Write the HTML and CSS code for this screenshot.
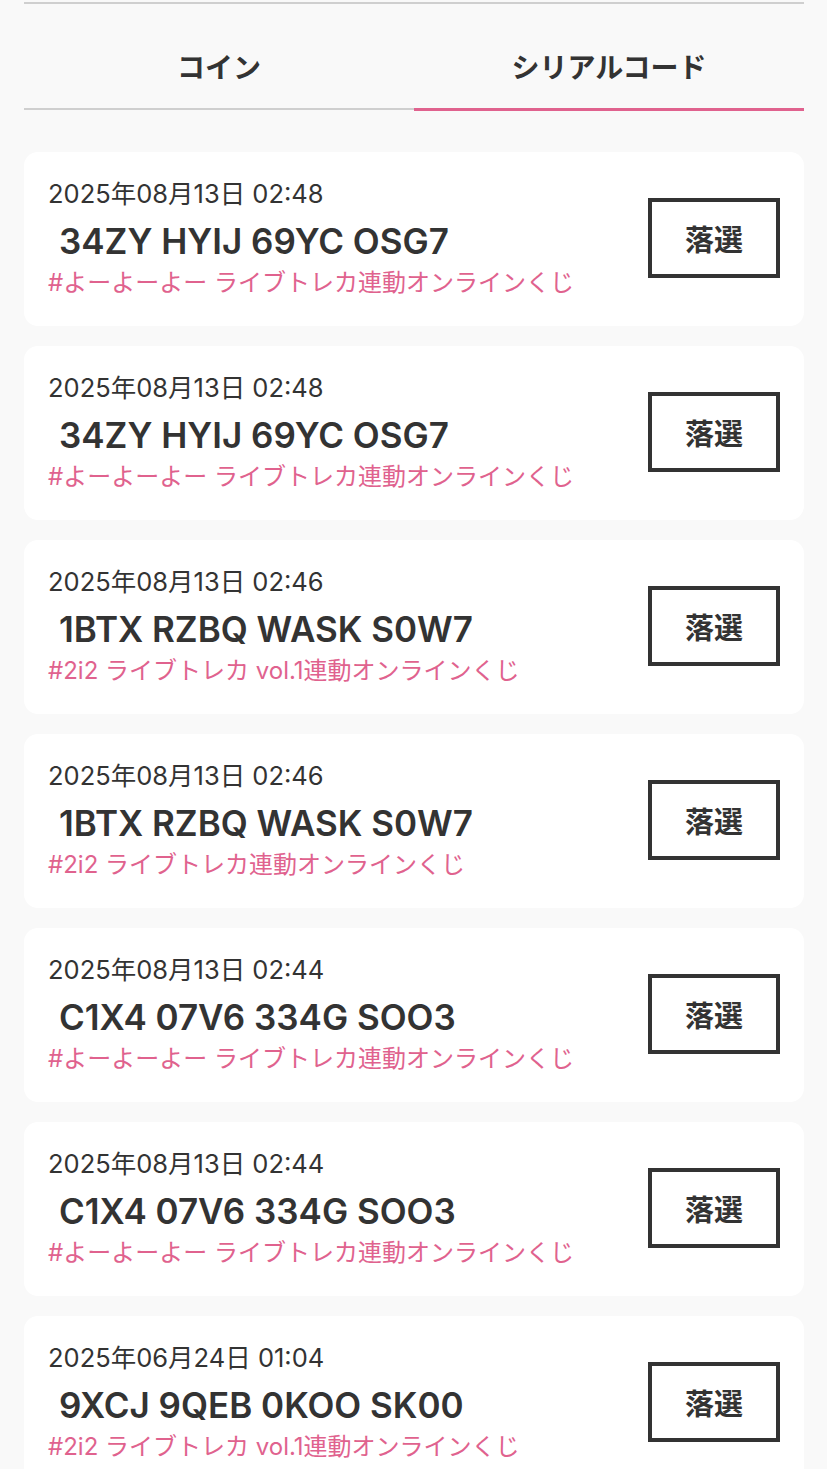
FILE: index.html
```html
<!DOCTYPE html>
<html lang="ja">
    <head>
        <meta charset="utf-8">
        <link rel="stylesheet" href="styles.css">
    </head>
    <body>
        <div class="page">
            <div class="tabs">
                <div class="tab">コイン</div>
                <div class="tab active">シリアルコード</div>
            </div>

            <div class="list">
                <div class="card">
                    <div class="info">
                        <div class="date">2025年08月13日 02:48</div>
                        <div class="code">34ZY HYIJ 69YC OSG7</div>
                        <div class="tag">#よーよーよー ライブトレカ連動オンラインくじ</div>
                    </div>
                    <div class="result">落選</div>
                </div>
                <div class="card">
                    <div class="info">
                        <div class="date">2025年08月13日 02:48</div>
                        <div class="code">34ZY HYIJ 69YC OSG7</div>
                        <div class="tag">#よーよーよー ライブトレカ連動オンラインくじ</div>
                    </div>
                    <div class="result">落選</div>
                </div>
                <div class="card">
                    <div class="info">
                        <div class="date">2025年08月13日 02:46</div>
                        <div class="code">1BTX RZBQ WASK S0W7</div>
                        <div class="tag">#2i2 ライブトレカ vol.1連動オンラインくじ</div>
                    </div>
                    <div class="result">落選</div>
                </div>
                <div class="card">
                    <div class="info">
                        <div class="date">2025年08月13日 02:46</div>
                        <div class="code">1BTX RZBQ WASK S0W7</div>
                        <div class="tag">#2i2 ライブトレカ連動オンラインくじ</div>
                    </div>
                    <div class="result">落選</div>
                </div>
                <div class="card">
                    <div class="info">
                        <div class="date">2025年08月13日 02:44</div>
                        <div class="code">C1X4 07V6 334G SOO3</div>
                        <div class="tag">#よーよーよー ライブトレカ連動オンラインくじ</div>
                    </div>
                    <div class="result">落選</div>
                </div>
                <div class="card">
                    <div class="info">
                        <div class="date">2025年08月13日 02:44</div>
                        <div class="code">C1X4 07V6 334G SOO3</div>
                        <div class="tag">#よーよーよー ライブトレカ連動オンラインくじ</div>
                    </div>
                    <div class="result">落選</div>
                </div>
                <div class="card">
                    <div class="info">
                        <div class="date">2025年06月24日 01:04</div>
                        <div class="code">9XCJ 9QEB 0KOO SK00</div>
                        <div class="tag">#2i2 ライブトレカ vol.1連動オンラインくじ</div>
                    </div>
                    <div class="result">落選</div>
                </div>
            </div>
        </div>
    </body>
</html>
```

FILE: styles.css
```css
body{
    margin:0;
    background-color:#f9f9f9;
    color:#333;
    font-family:Inter, "Noto Sans CJK JP", sans-serif;
}

.page{
    padding:0 23px 0 24px;
}

.tabs{
    display:flex;
    align-items:flex-start;
    border-top:2px solid #cfcfcf;
    margin-top:2px;
}
.tab{
    flex:1;
    height:84px;
    padding-top:20px;
    display:flex;
    align-items:center;
    justify-content:center;
    font-family:"Noto Sans CJK JP", sans-serif;
    font-size:28px;
    font-weight:bold;
    border-bottom:2px solid #cfcfcf;
}
.tab.active{
    border-bottom:3px solid #e0628e;
}

.list{
    display:flex;
    flex-direction:column;
    gap:20px;
    margin-top:41px;
}

.card{
    background-color:#fff;
    border-radius:14px;
    padding:24px 24px 27px 24px;
    display:flex;
    align-items:center;
    justify-content:space-between;
}

.date{
    font-size:25.5px;
    line-height:36px;
}
.code{
    font-size:35px;
    font-weight:600;
    line-height:44px;
    margin:7px 0 4px 11px;
}
.tag{
    font-size:24px;
    line-height:32px;
    color:#e0628e;
}

.result{
    width:124px;
    height:72px;
    border:4px solid #333;
    display:flex;
    align-items:center;
    justify-content:center;
    font-family:"Noto Sans CJK JP", sans-serif;
    font-size:29px;
    font-weight:bold;
}
```
